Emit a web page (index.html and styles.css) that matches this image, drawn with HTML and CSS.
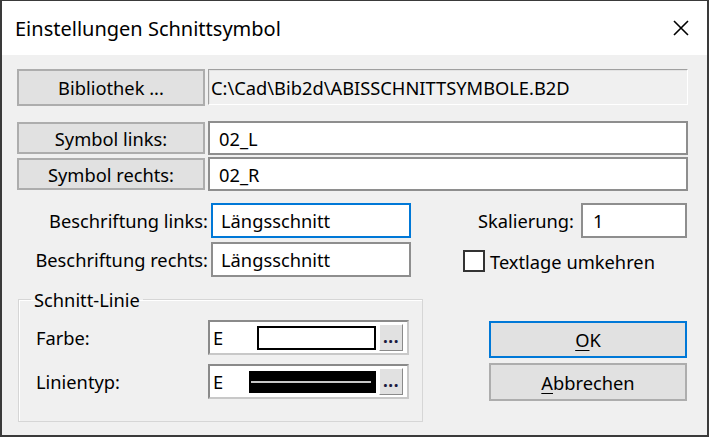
FILE: index.html
```html
<!DOCTYPE html>
<html>
<head>
<meta charset="utf-8">
<link rel="stylesheet" href="styles.css">
</head>
<body>
<div class="window">
  <div class="titlebar">
    <span class="title">Einstellungen Schnittsymbol</span>
    <svg class="close" width="16" height="16" viewBox="0 0 16 16"><path d="M1 1 L15 15 M15 1 L1 15" stroke="#000" stroke-width="1.6" fill="none"/></svg>
  </div>
  <div class="content">
    <div class="row r1">
      <div class="btn lib">Bibliothek ...</div>
      <div class="field readonly">C:\Cad\Bib2d\ABISSCHNITTSYMBOLE.B2D</div>
    </div>
    <div class="row r2">
      <div class="btn sym">Symbol links:</div>
      <div class="field edit">02_L</div>
    </div>
    <div class="row r3">
      <div class="btn sym">Symbol rechts:</div>
      <div class="field edit">02_R</div>
    </div>
    <div class="lower">
      <div class="leftcol">
        <div class="lrow">
          <span class="lbl">Beschriftung links:</span>
          <div class="field text focus">Längsschnitt</div>
        </div>
        <div class="lrow second">
          <span class="lbl">Beschriftung rechts:</span>
          <div class="field text">Längsschnitt</div>
        </div>
        <fieldset class="group">
          <legend>Schnitt-Linie</legend>
          <div class="grow">
            <span class="glbl">Farbe:</span>
            <div class="combo">
              <span class="e">E</span>
              <span class="swatch"></span>
              <span class="dots">...</span>
            </div>
          </div>
          <div class="grow second">
            <span class="glbl">Linientyp:</span>
            <div class="combo">
              <span class="e">E</span>
              <span class="linebar"><span class="inner"></span></span>
              <span class="dots">...</span>
            </div>
          </div>
        </fieldset>
      </div>
      <div class="rightcol">
        <div class="srow">
          <span class="slbl">Skalierung:</span>
          <div class="field scale">1</div>
        </div>
        <div class="crow">
          <span class="check"></span>
          <span class="ctext">Textlage umkehren</span>
        </div>
        <div class="btn dlg ok"><span class="u">O</span>K</div>
        <div class="btn dlg cancel"><span class="u">A</span>bbrechen</div>
      </div>
    </div>
  </div>
</div>
</body>
</html>
```

FILE: styles.css
```css
* { box-sizing: border-box; }
html, body { margin: 0; padding: 0; }
body {
  width: 709px;
  height: 437px;
  overflow: hidden;
  font-family: "Noto Sans", "Open Sans", sans-serif;
  font-size: 18.3px;
  color: #000;
}
.window {
  width: 709px;
  height: 437px;
  border: 2px solid #3a3a3a;
  border-top-width: 1px;
  display: flex;
  flex-direction: column;
  background: #f0f0f0;
}
.titlebar {
  height: 54px;
  flex: none;
  background: #fff;
  display: flex;
  align-items: center;
  justify-content: space-between;
  padding: 0 18px 0 13px;
}
.title { font-size: 20px; }
.close { display: block; }
.content {
  flex: 1;
  padding: 14px 19px 0 15px;
}
.row { display: flex; gap: 3px; align-items: flex-start; }
.r1 { height: 38px; }
.r2 { margin-top: 14px; height: 34px; }
.r3 { margin-top: 2px; height: 34px; }
.btn {
  background: #e1e1e1;
  border: 2px solid #adadad;
  display: flex;
  align-items: center;
  justify-content: center;
}
.lib { width: 188px; height: 37px; }
.sym { width: 188px; height: 32px; margin-top: 1px; }
.field {
  background: #fff;
  border: 2px solid #8e8e8e;
  display: flex;
  align-items: center;
}
.readonly {
  flex: 1;
  height: 36px;
  background: #f0f0f0;
  border-width: 1px;
  border-color: #a0a0a0 #fff #fff #a0a0a0;
  box-shadow: inset 1px 1px 0 #e3e3e3;
  padding-left: 2px;
}
.edit { flex: 1; height: 34px; padding-left: 9px; }
.lower {
  margin-top: 12px;
  display: grid;
  grid-template-columns: 406px 224px;
  column-gap: 40px;
}
.lrow { display: flex; align-items: center; height: 35px; }
.lrow.second { margin-top: 4px; }
.lbl { width: 194px; text-align: right; padding-right: 3px; white-space: nowrap; }
.text { width: 200px; height: 35px; padding-left: 8px; }
.focus { border-color: #0078d7; }
.group {
  margin: 10px 0 0 1px;
  border: 1px solid #d6d6d6;
  box-shadow: inset 1px 1px 0 #fff;
  padding: 8px 13px 22px 17px;
  min-width: 0;
}
.group legend { padding: 0 3px; margin-left: -5px; }
.grow { display: flex; align-items: center; height: 35px; }
.grow.second { margin-top: 9px; }
.glbl { flex: 1; }
.combo {
  width: 201px;
  height: 35px;
  background: #fff;
  border: 2px solid;
  border-color: #8a8a8a #c8c8c8 #c8c8c8 #8a8a8a;
  display: flex;
  align-items: center;
  padding: 0 4px 0 3px;
}
.e { width: 44px; }
.swatch {
  width: 119px;
  height: 24px;
  border: 2px solid #000;
  background: #fff;
}
.linebar {
  width: 127px;
  height: 22px;
  margin-left: -8px;
  background: #000;
  display: flex;
  align-items: center;
  padding: 0 5px 0 2px;
}
.linebar .inner { flex: 1; height: 2px; background: #c8c8c8; }
.dots {
  margin-left: auto;
  width: 24px;
  height: 27px;
  background: #e1e1e1;
  border: 1px solid;
  border-color: #fff #8a8a8a #8a8a8a #fff;
  display: flex;
  align-items: flex-end;
  justify-content: center;
  line-height: 1;
  padding-bottom: 5px;
  font-size: 17px;
  font-weight: bold;
  letter-spacing: 0.5px;
  color: #1a1a40;
}
.rightcol { display: flex; flex-direction: column; }
.srow { display: flex; align-items: center; height: 35px; justify-content: flex-end; }
.slbl { margin-right: 7px; }
.scale { width: 106px; height: 35px; padding-left: 10px; }
.crow { display: flex; align-items: center; margin-top: 12px; height: 22px; }
.check {
  width: 22px;
  height: 22px;
  background: #fff;
  border: 2px solid #333;
  margin-right: 5px;
}
.dlg { width: 198px; margin-left: 26px; }
.ok { height: 37px; margin-top: 49px; border-color: #0078d7; }
.cancel { height: 38px; margin-top: 5px; }
.u { text-decoration: underline; text-underline-offset: 3px; }
```
